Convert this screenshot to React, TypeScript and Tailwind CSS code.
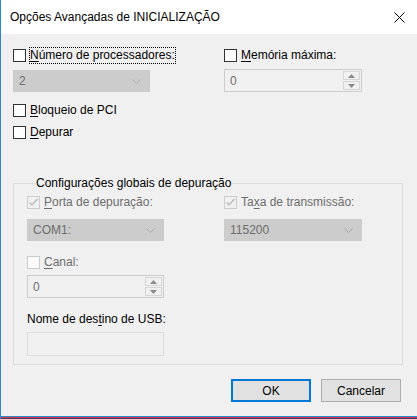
import { ReactNode } from "react";

// Win10 style "advanced boot options" dialog

function Box({
  checked = false,
  disabled = false,
  light = false,
}: {
  checked?: boolean;
  disabled?: boolean;
  light?: boolean;
}) {
  return (
    <span
      className={`flex h-[13px] w-[13px] shrink-0 items-center justify-center border ${
        disabled ? "border-[#cccccc]" : "border-[#333333] bg-white"
      } ${disabled && light ? "bg-[#fbfbfb]" : ""}`}
    >
      {checked && (
        <svg width="11" height="11" viewBox="0 0 11 11">
          <path
            d="M1.5 5.5 L4 8 L9.5 2"
            fill="none"
            stroke={disabled ? "#b4b4b4" : "#333"}
            strokeWidth="1.2"
          />
        </svg>
      )}
    </span>
  );
}

function CheckRow({
  children,
  checked,
  disabled,
  light,
  focus,
}: {
  children: ReactNode;
  checked?: boolean;
  disabled?: boolean;
  light?: boolean;
  focus?: boolean;
}) {
  return (
    <div className="flex h-[17px] items-center">
      <Box checked={checked} disabled={disabled} light={light} />
      <span
        className={`ml-[4px] whitespace-nowrap leading-[15px] ${
          disabled ? "text-[#6d6d6d]" : "text-black"
        } ${focus ? "outline-1 outline-dotted outline-black" : ""}`}
      >
        {children}
      </span>
    </div>
  );
}

function Combo({ value, width }: { value: string; width: string }) {
  return (
    <div
      className={`flex h-[22px] ${width} items-center justify-between border border-[#cccccc] bg-[#cccccc] pl-[5px] pr-[8px] text-[#6d6d6d]`}
    >
      <span>{value}</span>
      <svg width="9" height="5" viewBox="0 0 9 5">
        <path d="M0.5 0.5 L4.5 4.5 L8.5 0.5" fill="none" stroke="#a6a6a6" />
      </svg>
    </div>
  );
}

function Spin({ value, width }: { value: string; width: string }) {
  return (
    <div
      className={`flex h-[23px] ${width} items-stretch border border-[#cccccc] bg-[#f0f0f0] text-[#6d6d6d]`}
    >
      <span className="flex flex-1 items-center pl-[5px]">{value}</span>
      <div className="flex w-[18px] flex-col gap-[1px] p-[1px] pl-0">
        <div className="flex flex-1 items-center justify-center border border-[#d6d6d6] bg-[#f0f0f0]">
          <svg width="7" height="4" viewBox="0 0 7 4">
            <path d="M0 4 L3.5 0 L7 4 Z" fill="#8a8a8a" />
          </svg>
        </div>
        <div className="flex flex-1 items-center justify-center border border-[#d6d6d6] bg-[#f0f0f0]">
          <svg width="7" height="4" viewBox="0 0 7 4">
            <path d="M0 0 L3.5 4 L7 0 Z" fill="#8a8a8a" />
          </svg>
        </div>
      </div>
    </div>
  );
}

const u = "underline decoration-1 underline-offset-[2px]";

export default function App() {
  return (
    <div className="flex h-[419px] w-[417px] flex-col overflow-hidden border-l border-[#2b88d8] bg-[#f0f0f0] font-['Liberation_Sans',Arial,sans-serif] text-[12px] text-black">
      {/* title bar */}
      <div className="flex h-[34px] shrink-0 items-center justify-between bg-white pl-[9px] pr-[12px]">
        <span className="text-[12px]">Opções Avançadas de INICIALIZAÇÃO</span>
        <svg width="11" height="11" viewBox="0 0 11 11">
          <path d="M0.5 0.5 L10.5 10.5 M10.5 0.5 L0.5 10.5" stroke="#000" strokeWidth="1" />
        </svg>
      </div>

      <div className="flex flex-1 flex-col pl-[12px] pr-[14px]">
        {/* top options */}
        <div className="mt-[13px] flex">
          <div className="w-[211px]">
            <CheckRow focus>
              <span className={u}>N</span>úmero de processadores:
            </CheckRow>
            <div className="mt-[6px]">
              <Combo value="2" width="w-[137px]" />
            </div>
          </div>
          <div>
            <CheckRow>
              <span className={u}>M</span>emória máxima:
            </CheckRow>
            <div className="mt-[5px]">
              <Spin value="0" width="w-[138px]" />
            </div>
          </div>
        </div>

        <div className="mt-[10px]">
          <CheckRow>
            <span className={u}>B</span>loqueio de PCI
          </CheckRow>
        </div>
        <div className="mt-[5px]">
          <CheckRow>
            <span className={u}>D</span>epurar
          </CheckRow>
        </div>

        {/* group box */}
        <div className="mt-[42px] w-[390px] border border-[#dcdcdc] pb-[8px] pl-[13px]">
          <div className="-mt-[9px] ml-[8px] h-[16px] w-fit bg-[#f0f0f0] px-[1px] leading-[16px]">
            Configurações globais de depuração
          </div>
          <div className="mt-[3px] flex">
            <div className="w-[197px]">
              <CheckRow checked disabled>
                <span className={u}>P</span>orta de depuração:
              </CheckRow>
              <div className="mt-[8px]">
                <Combo value="COM1:" width="w-[137px]" />
              </div>
            </div>
            <div>
              <CheckRow checked disabled>
                Ta<span className={u}>x</span>a de transmissão:
              </CheckRow>
              <div className="mt-[8px]">
                <Combo value="115200" width="w-[138px]" />
              </div>
            </div>
          </div>

          <div className="mt-[13px]">
            <CheckRow disabled light>
              <span className={u}>C</span>anal:
            </CheckRow>
          </div>
          <div className="mt-[4px]">
            <Spin value="0" width="w-[137px]" />
          </div>

          <div className="mt-[13px] h-[16px] leading-[16px]">
            Nome de des<span className={u}>t</span>ino de USB:
          </div>
          <div className="mt-[5px] h-[24px] w-[137px] border border-[#dcdcdc] bg-[#f0f0f0]" />
        </div>

        {/* buttons */}
        <div className="mt-[14px] flex justify-end gap-[10px] pr-[2px]">
          <button className="h-[23px] w-[80px] border-2 border-[#0078d7] bg-[#e1e1e1] text-[12px]">
            OK
          </button>
          <button className="h-[23px] w-[80px] border border-[#adadad] bg-[#e1e1e1] text-[12px]">
            Cancelar
          </button>
        </div>
        <div className="flex-1" />
      </div>

      <div className="h-[1px] shrink-0 bg-[#2b88d8]" />
      <div className="h-[1px] shrink-0 bg-[#e0343f]" />
      <div className="h-[1px] shrink-0 bg-[#3a3f55]" />
    </div>
  );
}
